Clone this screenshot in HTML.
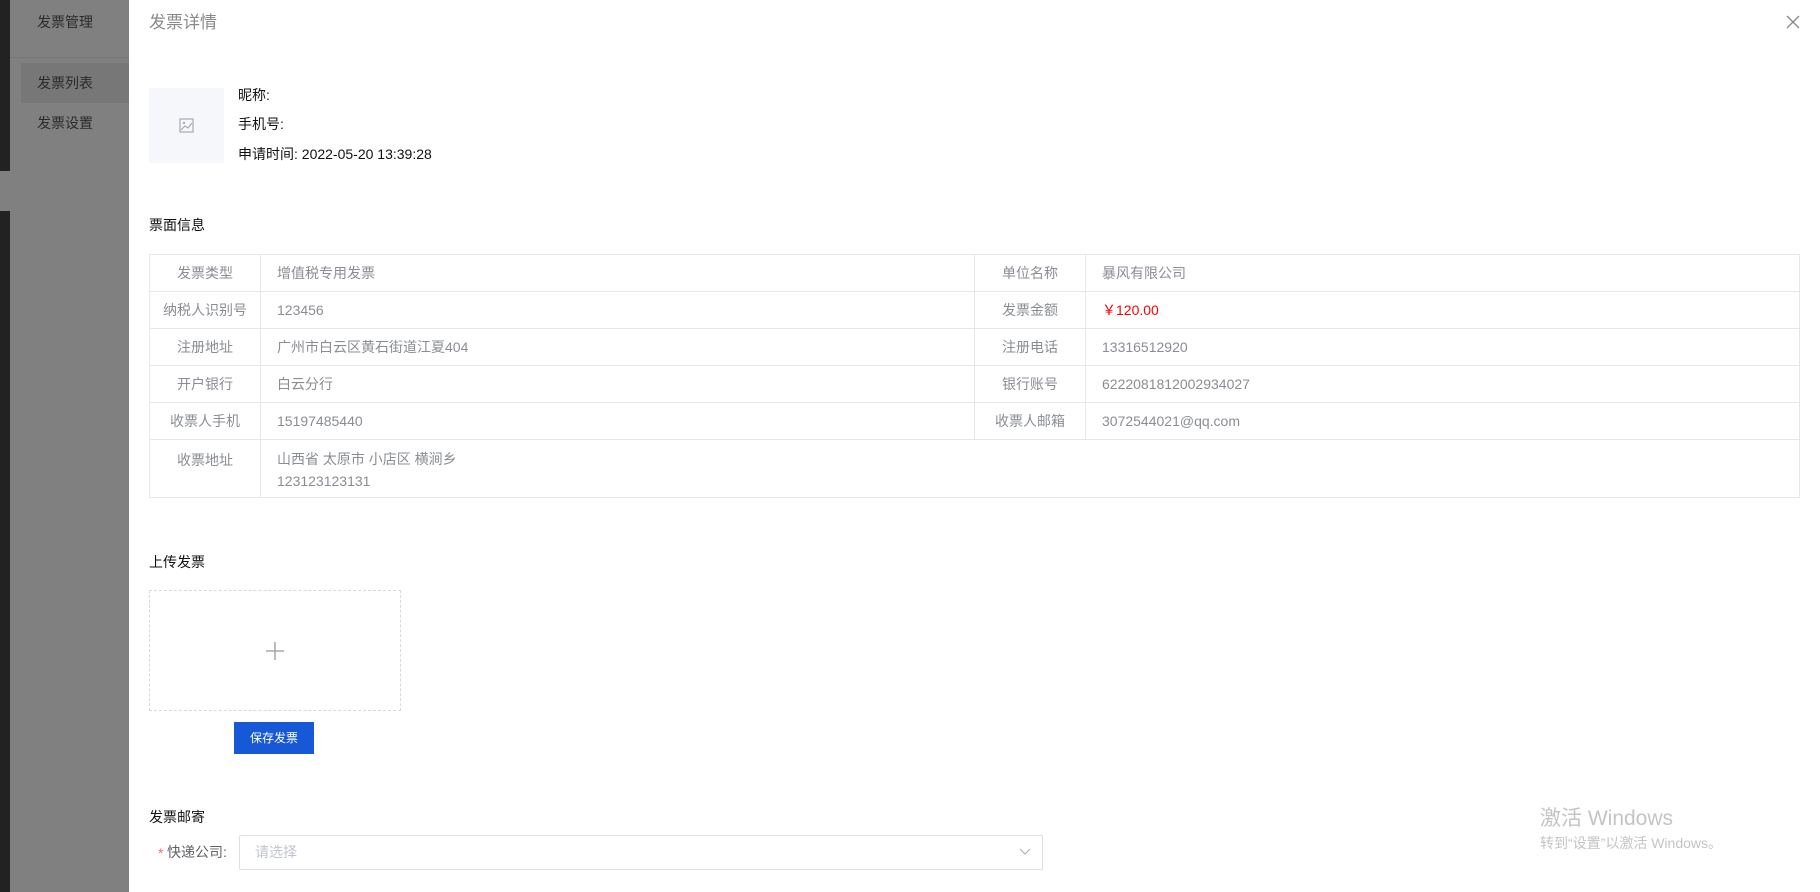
<!DOCTYPE html>
<html><head><meta charset="utf-8"><style>
*{margin:0;padding:0;box-sizing:border-box}
body{width:1820px;height:892px;overflow:hidden;position:relative;background:#fff;font-family:"Liberation Sans","Noto Sans CJK SC",sans-serif;font-size:14px;color:#606266}
.abs{position:absolute}
.side{left:0;top:0;width:129px;height:892px;background:#808080}
.t{position:absolute;white-space:nowrap;line-height:1}
table{position:absolute;left:149px;top:254px;width:1651px;border-collapse:collapse;table-layout:fixed}
td{border:1px solid #e4e7ed;height:37px;padding:0 16px;font-size:14px;color:#8a8d93;vertical-align:middle}
td.l{text-align:center;padding:0}
</style></head><body>
<div class="abs side"></div>
<div class="abs" style="left:0;top:0;width:10px;height:171px;background:#222"></div>
<div class="abs" style="left:0;top:211px;width:10px;height:681px;background:#222"></div>
<div class="abs" style="left:10px;top:57px;width:119px;height:1px;background:#777"></div>
<div class="abs" style="left:21px;top:63px;width:108px;height:40px;background:#777"></div>
<div class="t" style="left:37px;top:15px;color:#2a2a2a;font-size:14px">发票管理</div>
<div class="t" style="left:37px;top:76px;color:#2a2a2a;font-size:14px">发票列表</div>
<div class="t" style="left:37px;top:116px;color:#2a2a2a;font-size:14px">发票设置</div>

<div class="t" style="left:149px;top:14px;font-size:17px;color:#8a8a8a">发票详情</div>
<svg class="abs" style="left:1786px;top:15px" width="14" height="14" viewBox="0 0 14 14"><path d="M1 1L13 13M13 1L1 13" stroke="#888" stroke-width="1.3"/></svg>

<div class="abs" style="left:149px;top:88px;width:75px;height:75px;background:#f5f7fa"></div>
<svg class="abs" style="left:179px;top:118px" width="15" height="15" viewBox="0 0 15 15"><rect x="1" y="1" width="13" height="13" fill="none" stroke="#a8abb2" stroke-width="1.2"/><path d="M2 12L6 8L9 10L13 5" fill="none" stroke="#a8abb2" stroke-width="1.2"/><circle cx="5" cy="5" r="1.2" fill="#a8abb2"/></svg>
<div class="t" style="left:238px;top:88px;color:#111">昵称:</div>
<div class="t" style="left:238px;top:117px;color:#111">手机号:</div>
<div class="t" style="left:238px;top:147px;color:#111">申请时间: 2022-05-20 13:39:28</div>

<div class="t" style="left:149px;top:218px;color:#111">票面信息</div>
<table>
<colgroup><col style="width:111px"><col style="width:714px"><col style="width:111px"><col></colgroup>
<tr><td class="l">发票类型</td><td>增值税专用发票</td><td class="l">单位名称</td><td>暴风有限公司</td></tr>
<tr><td class="l">纳税人识别号</td><td>123456</td><td class="l">发票金额</td><td style="color:#f00">￥120.00</td></tr>
<tr><td class="l">注册地址</td><td>广州市白云区黄石街道江夏404</td><td class="l">注册电话</td><td>13316512920</td></tr>
<tr><td class="l">开户银行</td><td>白云分行</td><td class="l">银行账号</td><td>6222081812002934027</td></tr>
<tr><td class="l">收票人手机</td><td>15197485440</td><td class="l">收票人邮箱</td><td>3072544021@qq.com</td></tr>
<tr><td class="l" style="height:58px;vertical-align:top;padding-top:10px">收票地址</td><td colspan="3" style="vertical-align:top;padding-top:8px;line-height:22px">山西省 太原市 小店区 横涧乡<br>123123123131</td></tr>
</table>

<div class="t" style="left:149px;top:555px;color:#111">上传发票</div>
<div class="abs" style="left:149px;top:590px;width:252px;height:121px;border:1px dashed #d9d9d9"></div>
<svg class="abs" style="left:265px;top:641px" width="20" height="20" viewBox="0 0 20 20"><path d="M10 1V19M1 10H19" stroke="#999" stroke-width="1.3"/></svg>
<div class="abs" style="left:234px;top:722px;width:80px;height:32px;background:#1658d6;color:#fff;font-size:12px;text-align:center;line-height:32px">保存发票</div>

<div class="t" style="left:149px;top:810px;color:#111">发票邮寄</div>
<div class="t" style="left:158px;top:846px;color:#f56c6c">*</div>
<div class="t" style="left:167px;top:845px;color:#606266">快递公司:</div>
<div class="abs" style="left:239px;top:835px;width:804px;height:35px;border:1px solid #dcdfe6;border-radius:2px"></div>
<div class="t" style="left:255px;top:845px;color:#c0c4cc">请选择</div>
<svg class="abs" style="left:1019px;top:848px" width="12" height="8" viewBox="0 0 12 8"><path d="M1 1L6 6L11 1" fill="none" stroke="#b0b3b8" stroke-width="1.2"/></svg>

<div class="t" style="left:1540px;top:808px;color:#c4c4c4;font-size:21px">激活 Windows</div>
<div class="t" style="left:1540px;top:836px;color:#c4c4c4;font-size:14px">转到“设置”以激活 Windows。</div>
</body></html>
